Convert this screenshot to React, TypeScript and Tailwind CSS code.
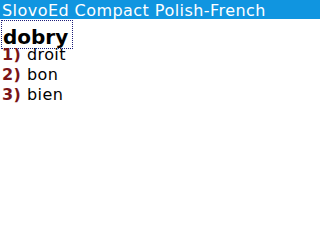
import React from 'react';

const senses = ['droit', 'bon', 'bien'];

export default function App() {
  return (
    <div className="w-[320px] h-[240px] bg-white overflow-hidden" style={{ fontFamily: '"DejaVu Sans", Verdana, sans-serif' }}>
      {/* title bar */}
      <div className="h-[19px] bg-[#1095e0] text-white text-[16px] leading-[21px] tracking-[0.45px] pl-[2px] whitespace-nowrap overflow-hidden">
        SlovoEd Compact Polish-French
      </div>
      {/* headword */}
      <div className="pl-[1px] pt-[1px]">
        <div className="box-border w-[72px] h-[29px] border border-dotted border-[#1c1c7a] pl-[1px] pt-[8px] text-[20px] font-bold leading-[16px] text-black">
          dobry
        </div>
      </div>
      {/* translations */}
      <div className="pl-[2px] text-[16px] tracking-[0.4px] text-black">
        {senses.map((s, i) => (
          <div key={s} className="flex h-[20px] leading-[12px]">
            <span className="w-[25px] shrink-0 font-bold text-[#7a1418]">{i + 1})</span>
            <span>{s}</span>
          </div>
        ))}
      </div>
    </div>
  );
}
